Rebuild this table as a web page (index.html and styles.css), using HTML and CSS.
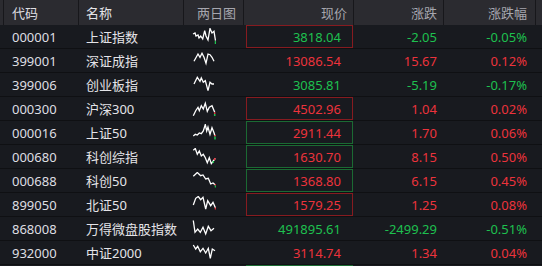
FILE: index.html
```html
<!DOCTYPE html>
<html lang="zh">
<head>
<meta charset="utf-8">
<link rel="stylesheet" href="styles.css">
</head>
<body>
<div class="table">
  <div class="row head">
    <div class="c pad"></div>
    <div class="c code">代码</div>
    <div class="c name">名称</div>
    <div class="c spark">两日图</div>
    <div class="c price">现价</div>
    <div class="c chg">涨跌</div>
    <div class="c pct">涨跌幅</div>
    <div class="c end"></div>
  </div>

  <div class="row green">
    <div class="c pad"></div><div class="c code">000001</div><div class="c name">上证指数</div>
    <div class="c spark"><svg viewBox="0 0 24 18" width="24" height="18"><polyline points="1,6 3,5 4,8 6,7 7,10 8.7,8 10.7,11 12.7,2.7 14,8 16,12 18,0.5 20,5 22,3.3 23.5,12.7"/><line class="tg" x1="23.5" y1="13" x2="23.5" y2="16"/></svg></div>
    <div class="c price"><span class="box rb">3818.04</span></div><div class="c chg">-2.05</div><div class="c pct">-0.05%</div><div class="c end"></div>
  </div>

  <div class="row red">
    <div class="c pad"></div><div class="c code">399001</div><div class="c name">深证成指</div>
    <div class="c spark"><svg viewBox="0 0 24 18" width="24" height="18"><polyline points="2,9.3 6,2 8,5.3 10,1.3 12,5.3 14,11.3 16,2 18,2.7 20,5.3 22,9.3"/></svg></div>
    <div class="c price"><span class="box">13086.54</span></div><div class="c chg">15.67</div><div class="c pct">0.12%</div><div class="c end"></div>
  </div>

  <div class="row green">
    <div class="c pad"></div><div class="c code">399006</div><div class="c name">创业板指</div>
    <div class="c spark"><svg viewBox="0 0 24 18" width="24" height="18"><polyline points="2,8 5.3,1.3 8,5.3 9.3,2 11.3,6.3 13.3,4.7 16,14.7 18,6.3 20,8 22,8"/></svg></div>
    <div class="c price"><span class="box">3085.81</span></div><div class="c chg">-5.19</div><div class="c pct">-0.17%</div><div class="c end"></div>
  </div>

  <div class="row red">
    <div class="c pad"></div><div class="c code">000300</div><div class="c name">沪深300</div>
    <div class="c spark"><svg viewBox="0 0 24 18" width="24" height="18"><polyline points="1.3,15.7 3.7,10.7 6,7.3 7.3,10.7 9.3,5.7 11.3,9 13.3,3.3 15.3,11.3 17.3,7.3 20,5.7 22.7,12.3"/><line class="tr" x1="22.7" y1="12.3" x2="22.7" y2="14"/><line class="tg" x1="22.7" y1="14" x2="22.7" y2="16"/></svg></div>
    <div class="c price"><span class="box rb">4502.96</span></div><div class="c chg">1.04</div><div class="c pct">0.02%</div><div class="c end"></div>
  </div>

  <div class="row red">
    <div class="c pad"></div><div class="c code">000016</div><div class="c name">上证50</div>
    <div class="c spark"><svg viewBox="0 0 24 18" width="24" height="18"><polyline points="1.3,12 3.3,10.3 5.3,11 7.3,9 9.3,9.7 11.3,7 13.3,0.5 14.7,7 16,3 18,10.3 20,3.7 22,8.7 23,12"/><line class="tr" x1="23" y1="11" x2="23" y2="12.5"/><line class="tg" x1="23" y1="12.5" x2="23" y2="15.5"/></svg></div>
    <div class="c price"><span class="box gb">2911.44</span></div><div class="c chg">1.70</div><div class="c pct">0.06%</div><div class="c end"></div>
  </div>

  <div class="row red">
    <div class="c pad"></div><div class="c code">000680</div><div class="c name">科创综指</div>
    <div class="c spark"><svg viewBox="0 0 24 18" width="24" height="18"><polyline points="1.3,2.3 3.3,0.5 5.3,6.3 7.3,3 9.3,8 11.3,6.3 13.3,9.7 15.3,14.7 17.3,9.7 19.3,15.7 21.3,13 23.3,10.3"/><line class="tr" x1="22" y1="12" x2="23.3" y2="10.3"/><line class="tg" x1="21.3" y1="13" x2="21.3" y2="15"/></svg></div>
    <div class="c price"><span class="box gb">1630.70</span></div><div class="c chg">8.15</div><div class="c pct">0.50%</div><div class="c end"></div>
  </div>

  <div class="row red">
    <div class="c pad"></div><div class="c code">000688</div><div class="c name">科创50</div>
    <div class="c spark"><svg viewBox="0 0 24 18" width="24" height="18"><polyline points="1.3,4.3 5.3,0.5 8.7,3.7 11,3 13.7,7 16.3,6.3 18.7,12 21,11 23.5,13"/><line class="tr" x1="23.5" y1="12" x2="23.5" y2="13.5"/><line class="tg" x1="23.5" y1="13.5" x2="23.5" y2="15.5"/></svg></div>
    <div class="c price"><span class="box gb">1368.80</span></div><div class="c chg">6.15</div><div class="c pct">0.45%</div><div class="c end"></div>
  </div>

  <div class="row red">
    <div class="c pad"></div><div class="c code">899050</div><div class="c name">北证50</div>
    <div class="c spark"><svg viewBox="0 0 24 18" width="24" height="18"><polyline points="1.3,9 3.7,2.3 6.3,0.5 8.7,3.7 11,1.3 13.7,13 15.7,4.7 18.7,9.7 21,6.3 23.5,12"/><line class="tr" x1="23.5" y1="11.5" x2="23.5" y2="13.5"/></svg></div>
    <div class="c price"><span class="box rb">1579.25</span></div><div class="c chg">1.25</div><div class="c pct">0.08%</div><div class="c end"></div>
  </div>

  <div class="row green">
    <div class="c pad"></div><div class="c code">868008</div><div class="c name">万得微盘股指数</div>
    <div class="c spark"><svg viewBox="0 0 24 18" width="24" height="18"><polyline points="1.3,0.5 3,12.3 5.7,9 8.3,12.3 11,7.3 13.7,14 16.3,6.3 19,10.7 22,8.3"/></svg></div>
    <div class="c price"><span class="box">491895.61</span></div><div class="c chg">-2499.29</div><div class="c pct">-0.51%</div><div class="c end"></div>
  </div>

  <div class="row red">
    <div class="c pad"></div><div class="c code">932000</div><div class="c name">中证2000</div>
    <div class="c spark"><svg viewBox="0 0 24 18" width="24" height="18"><polyline points="1.3,1 3.7,5 5.7,2.3 8.3,7.7 11,4.3 13.7,9 16.3,4.3 18.3,14.3 20.3,5 23,6.7"/></svg></div>
    <div class="c price"><span class="box">3114.74</span></div><div class="c chg">1.34</div><div class="c pct">0.04%</div><div class="c end"></div>
  </div>

  <div class="row red">
    <div class="c pad"></div><div class="c code"></div><div class="c name"></div>
    <div class="c spark"></div>
    <div class="c price"><span class="box gb"></span></div><div class="c chg"></div><div class="c pct"></div><div class="c end"></div>
  </div>
</div>
</body>
</html>
```

FILE: styles.css
```css
* { box-sizing: border-box; }
html, body {
  margin: 0;
  padding: 0;
  background: #181a1f;
  overflow: hidden;
}
body {
  width: 542px;
  height: 266px;
  font-family: "Noto Sans", "Noto Sans CJK SC", sans-serif;
  font-size: 13px;
}
.table {
  display: flex;
  flex-direction: column;
}
.row {
  display: grid;
  grid-template-columns: 4px 75px 105px 60px 110px 90px 92px 6px;
  height: 24px;
  border-bottom: 1px solid #0f1013;
  background: #181a1f;
}
.c {
  display: flex;
  align-items: center;
  white-space: nowrap;
  overflow: hidden;
}
.head {
  height: 25px;
  background: #2b2b30;
  border-bottom: none;
  color: #a6a6ae;
}
.head .c {
  border-right: 1px solid #17171b;
  font-family: "Noto Sans CJK SC", sans-serif;
}
.head .c.end { border-right: none; }
.head .code, .head .name { padding-left: 5px; }
.head .spark { justify-content: flex-end; padding-right: 7px; }
.head .price { justify-content: flex-end; padding-right: 6px; }
.head .chg { justify-content: flex-end; padding-right: 6px; }
.head .pct { justify-content: flex-end; padding-right: 8px; }

.row .code { padding-left: 8px; color: #dedee2; }
.row .name { padding-left: 7px; color: #e4e4e8; font-family: "Noto Sans", "Noto Sans CJK SC", sans-serif; }
.row:not(.head) .spark { padding-left: 8px; align-items: flex-start; padding-top: 3px; }
.spark svg { display: block; }
.spark polyline { fill: none; stroke: #ffffff; stroke-width: 1.3; stroke-linejoin: miter; }
.spark .tg { stroke: #1ec04f; stroke-width: 1.5; }
.spark .tr { stroke: #e8303a; stroke-width: 1.5; }

.row:not(.head) .price { padding-left: 2px; padding-right: 1px; align-items: stretch; }
.box {
  flex: 1;
  display: flex;
  align-items: center;
  justify-content: flex-end;
  padding-right: 11px;
  border: 1px solid transparent;
}
.box.rb { border-color: #861b20; }
.box.gb { border-color: #1b6a33; }
.row:not(.head) .chg { justify-content: flex-end; padding-right: 7px; }
.row:not(.head) .pct { justify-content: flex-end; padding-right: 9px; }

.green .price, .green .chg, .green .pct { color: #1ec04f; }
.red .price, .red .chg, .red .pct { color: #ec333c; }
```
